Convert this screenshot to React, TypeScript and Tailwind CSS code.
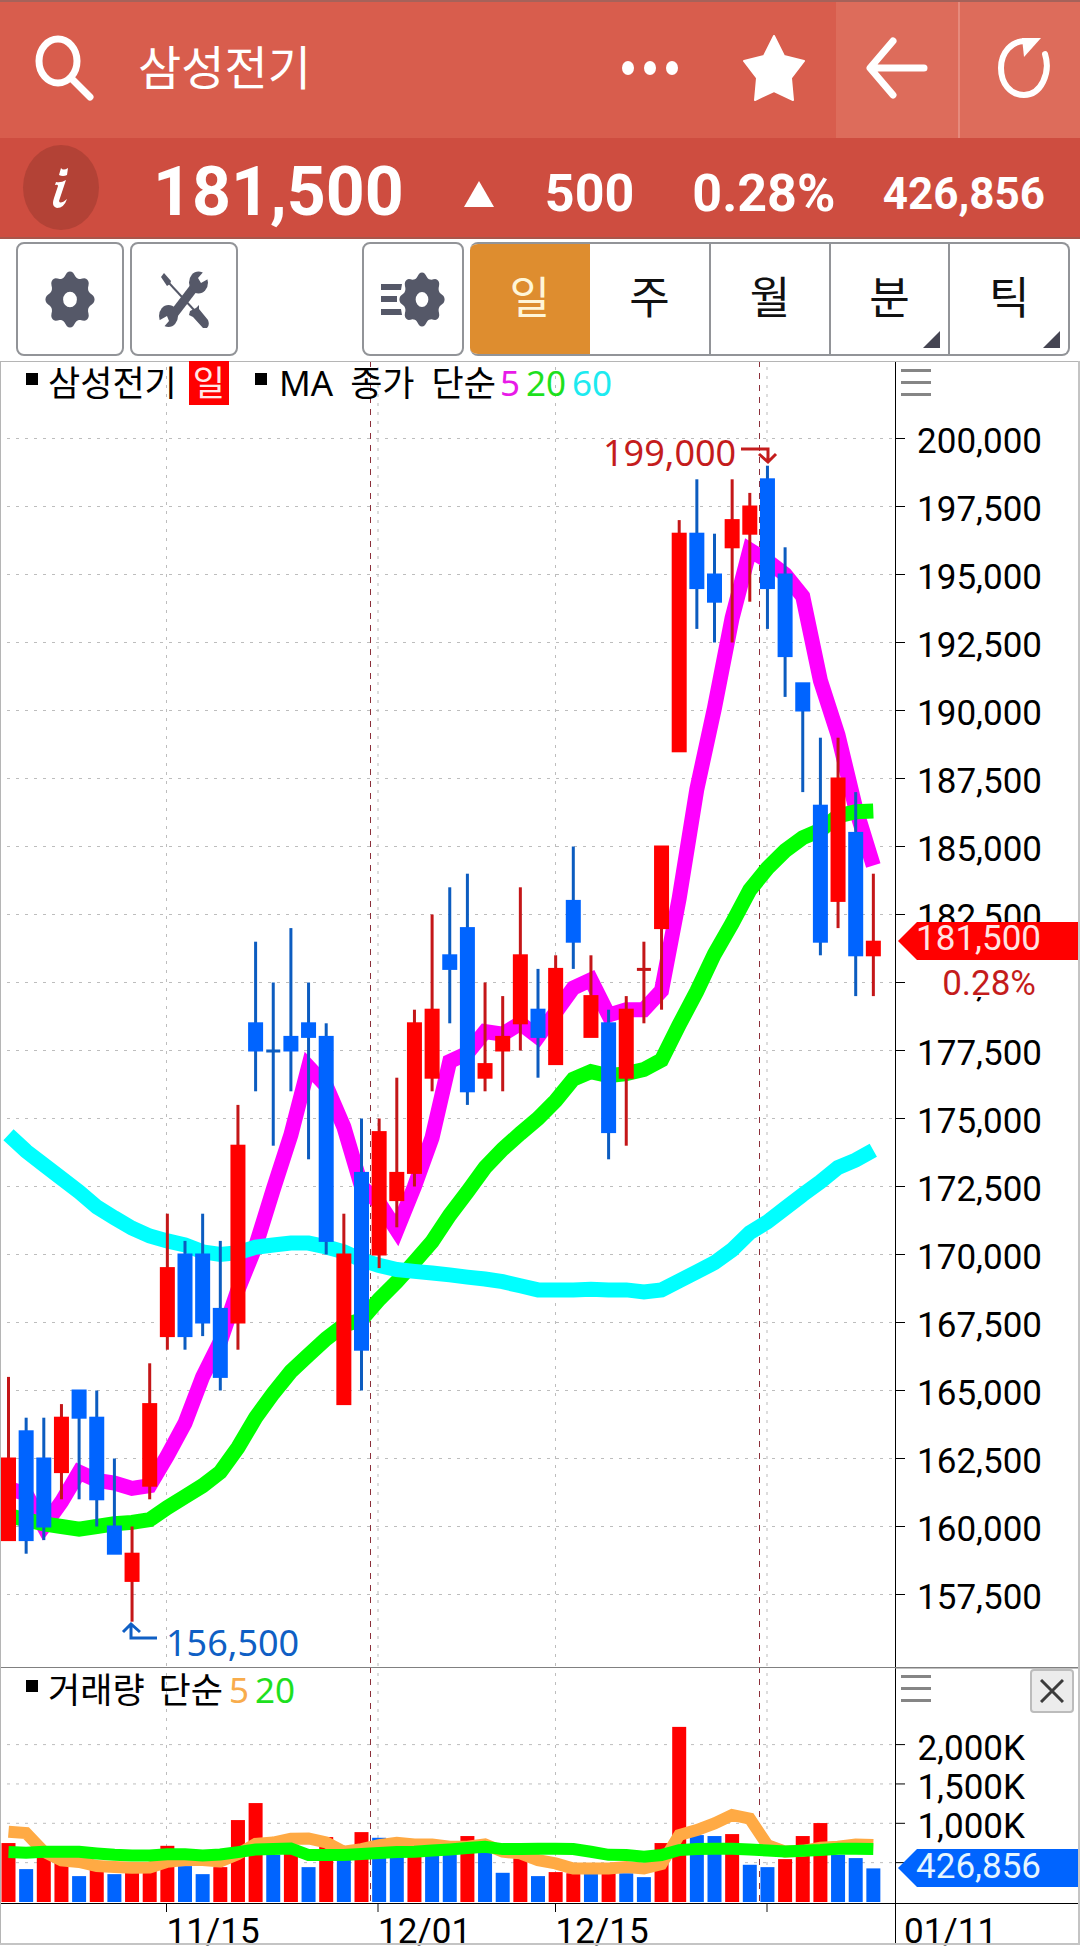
import { useState } from "react";
import clsx from "clsx";

type Candle = {
  open: number;
  high: number;
  low: number;
  close: number;
  volume: number;
  volumeUp: boolean;
};

// [open, high, low, close, volume, volumeUp], prices and volume in thousands
const rows: [number, number, number, number, number, number][] = [
  [159.5, 165.5, 159.5, 162.5, 749, 1],
  [163.5, 164, 159, 159.5, 418, 0],
  [162.5, 164, 159.5, 160, 575, 1],
  [162, 164.5, 161, 164, 500, 1],
  [165, 165, 161, 164, 329, 0],
  [164, 165, 160, 161, 420, 1],
  [160, 162.5, 159, 159, 354, 0],
  [158, 160, 156.5, 159, 390, 1],
  [161.5, 166, 161, 164.5, 410, 1],
  [167, 171.5, 166.5, 169.5, 714, 1],
  [170, 170.5, 166.5, 167, 456, 0],
  [170, 171.5, 167, 167.5, 354, 0],
  [168, 170.5, 165, 165.5, 443, 1],
  [167.5, 175.5, 166.5, 174, 1041, 1],
  [178.5, 181.5, 176, 177.5, 1257, 1],
  [177.5, 180, 174, 177.5, 600, 0],
  [178, 182, 176, 177.5, 620, 1],
  [178.5, 180, 173.5, 178, 443, 0],
  [178, 178.5, 170, 170.5, 825, 1],
  [164.5, 171.5, 164.5, 170, 580, 0],
  [173, 175, 165, 166.5, 888, 1],
  [170, 175, 169.5, 174.5, 816, 0],
  [172, 176.5, 171, 173, 600, 0],
  [173, 179, 172.5, 178.5, 590, 1],
  [176.5, 182.5, 176, 179, 590, 0],
  [181, 183.5, 178.5, 180.5, 600, 0],
  [182, 184, 175.5, 176, 838, 1],
  [176.5, 180, 176, 177, 640, 0],
  [177.5, 179.5, 176, 178, 371, 0],
  [178.5, 183.5, 177.5, 181, 555, 1],
  [179, 180.5, 176.5, 178, 329, 0],
  [177, 181, 177, 180.5, 380, 1],
  [183, 185, 180.5, 181.5, 365, 1],
  [178, 181, 178, 179.5, 365, 0],
  [178.5, 179, 173.5, 174.5, 370, 1],
  [176.5, 179.5, 174, 179, 365, 0],
  [180.5, 181.5, 178.5, 180.5, 316, 0],
  [182, 185, 179, 185, 749, 1],
  [188.5, 197, 188.5, 196.5, 2225, 1],
  [196.5, 198.5, 193, 194.5, 850, 0],
  [195, 196.5, 192.5, 194, 838, 0],
  [196, 198.5, 192.5, 197, 863, 1],
  [196.5, 198, 194, 197.5, 473, 0],
  [198.5, 199, 193, 194.5, 443, 0],
  [195, 196, 190.5, 192, 545, 1],
  [191, 191, 187, 190, 838, 1],
  [186.5, 189, 181, 181.5, 1003, 1],
  [183, 189, 182, 187.5, 600, 0],
  [185.5, 187, 179.5, 181, 558, 0],
  [181, 184, 179.5, 181.5, 427, 0],
];

const candles: Candle[] = rows.map(([open, high, low, close, volume, up]) => ({
  open,
  high,
  low,
  close,
  volume,
  volumeUp: up === 1,
}));

const dojiDown = 15;

// Averages for the sessions whose look-back starts before the visible range
const ma5Head = [161.4, 161.2, 160, 160.9];
const ma20Head = [
  160.4, 160.25, 160.1, 160, 159.9, 160, 160.1, 160.15, 160.25, 160.7, 161.1, 161.5, 162, 162.9,
  164, 164.9, 165.7, 166.3, 166.9,
];
const ma60 = [
  174.4, 173.8, 173.3, 172.8, 172.3, 171.75, 171.35, 170.97, 170.68, 170.5, 170.35, 170.1, 170,
  170.07, 170.27, 170.35, 170.42, 170.42, 170.28, 170.1, 169.8, 169.6, 169.45, 169.38, 169.32,
  169.25, 169.17, 169.1, 169, 168.85, 168.7, 168.7, 168.7, 168.72, 168.7, 168.7, 168.62, 168.7,
  169.03, 169.36, 169.7, 170.17, 170.8, 171.2, 171.7, 172.2, 172.67, 173.2, 173.47, 173.83,
];
const volumeMa5 = [
  893, 876, 640, 530, 510, 456, 443, 435, 439, 511, 532, 532, 515, 609, 740, 755, 804, 808, 757,
  638, 672, 723, 753, 732, 732, 702, 702, 732, 640, 617, 532, 490, 426, 426, 426, 443, 426, 481,
  850, 914, 999, 1105, 1058, 723, 640, 650, 690, 702, 732, 723,
];
const volumeMa20 = [
  634, 625, 638, 638, 638, 617, 600, 592, 592, 608, 608, 592, 604, 634, 668, 672, 680, 596, 596,
  596, 609, 621, 634, 638, 655, 668, 685, 702, 672, 672, 676, 676, 672, 638, 600, 596, 575, 596,
  659, 672, 676, 676, 668, 655, 642, 650, 659, 676, 676, 672,
];

const movingAverage = (head: number[], size: number) =>
  candles.map((_, i) =>
    i < size - 1
      ? head[i]
      : candles.slice(i - size + 1, i + 1).reduce((sum, c) => sum + c.close, 0) / size
  );

const ma5 = movingAverage(ma5Head, 5);
const ma20 = movingAverage(ma20Head, 20);

const PLOT_RIGHT = 895;
const xAt = (i: number) => 8.5 + i * 17.65;
const priceY = (p: number) => 77.5 + (200 - p) * 27.2;
const volumeY = (v: number) => 235 - v * 0.0787;

const points = (values: number[], y: (v: number) => number) =>
  values.map((v, i) => `${xAt(i).toFixed(1)},${y(v).toFixed(1)}`).join(" ");

const priceTicks = Array.from({ length: 18 }, (_, i) => 200 - i * 2.5);
const volumeTicks = [2000, 1500, 1000, 500];
const dateLines = [
  { x: 166.5, label: "11/15", wide: false },
  { x: 378, label: "12/01", wide: true },
  { x: 555.5, label: "12/15", wide: false },
  { x: 767, label: "", wide: true },
];
const monthLines = [370.5, 759.5];

const gearPath =
  Array.from({ length: 96 }, (_, i) => {
    const a = (i / 96) * Math.PI * 2;
    const wave = Math.cos(a * 8);
    const r = 25.8 + 2.7 * Math.sign(wave) * Math.pow(Math.abs(wave), 0.75);
    return `${i ? "L" : "M"}${(Math.cos(a) * r).toFixed(2)} ${(Math.sin(a) * r).toFixed(2)}`;
  }).join("") + "ZM8 0A8 8 0 1 0 -8 0A8 8 0 1 0 8 0Z";

function GearIcon({ className }: { className?: string }) {
  return (
    <svg viewBox="-29 -29 58 58" preserveAspectRatio="none" className={className}>
      <path d={gearPath} fill="currentColor" fillRule="evenodd" />
    </svg>
  );
}

function ToolsIcon() {
  return (
    <svg viewBox="0 0 50 57" className="h-[57px] w-[50px]" fill="currentColor">
      <path d="M5 2L12 10L11 13L8 15L2 6Z" />
      <path d="M10 12L36 40" stroke="currentColor" strokeWidth="2" />
      <path d="M30 44L31 40L37 37L40 34L40 38L49 49Q51 54 48 57L44 57L34 46Z" />
      <path d="M14 44L37 14" stroke="currentColor" strokeWidth="9" />
      <ellipse cx="39.5" cy="11.5" rx="9.5" ry="11" />
      <path d="M46 -1L39 7L42 12L51 7Z" fill="#fff" />
      <ellipse cx="9.5" cy="45" rx="9.5" ry="11" />
      <path d="M3 58L10 50L8 45L-1 50Z" fill="#fff" />
    </svg>
  );
}

function Header() {
  return (
    <header className="flex h-[138px] items-stretch border-t-2 border-[#a5625a] bg-[#d85d4d] text-white">
      <button aria-label="검색" className="flex w-[128px] items-center pb-1 pl-[34px]">
        <svg viewBox="0 0 60 66" className="h-[66px] w-[60px]" fill="none" stroke="currentColor" strokeWidth="7">
          <ellipse cx="24" cy="26" rx="19" ry="22" />
          <path d="M38 44L56 62" strokeLinecap="round" />
        </svg>
      </button>
      <h1 className="flex flex-1 items-center pb-3 pl-[10px] text-[47px] leading-none">삼성전기</h1>
      <button aria-label="더보기" className="flex w-[84px] items-center justify-center pb-1">
        <svg viewBox="0 0 58 16" className="h-[16px] w-[58px]" fill="currentColor">
          <ellipse cx="7" cy="8" rx="6" ry="7" />
          <ellipse cx="29" cy="8" rx="6" ry="7" />
          <ellipse cx="51" cy="8" rx="6" ry="7" />
        </svg>
      </button>
      <button aria-label="관심종목" className="flex w-[144px] items-center justify-center pb-1 pl-5">
        <svg viewBox="0 0 62 66" className="h-[66px] w-[62px]" fill="currentColor" stroke="currentColor" strokeWidth="2" strokeLinejoin="round">
          <path d="M31 1L41 21L61 26L48 43L50 65L31 56L12 65L14 43L1 26L21 21Z" />
        </svg>
      </button>
      <button aria-label="뒤로" className="flex w-[124px] items-center justify-center border-r-2 border-[#e68a7c] bg-[#dd6c5b] pb-1">
        <svg viewBox="0 0 62 62" className="h-[62px] w-[62px]" fill="none" stroke="currentColor" strokeWidth="7" strokeLinecap="round" strokeLinejoin="round">
          <path d="M27 4L4 31L27 58M5 31H58" />
        </svg>
      </button>
      <button aria-label="새로고침" className="flex w-[120px] items-center justify-center bg-[#dd6c5b] pb-1 pl-2">
        <svg viewBox="0 0 54 62" className="h-[62px] w-[54px]" fill="none" stroke="currentColor" strokeWidth="6">
          <path d="M48 17C54 36 44 58 27 58C13 58 4 46 4 31C4 15 15 4 28 4" strokeLinecap="round" />
          <path d="M25 1H44L27 20Z" fill="currentColor" stroke="none" />
        </svg>
      </button>
    </header>
  );
}

function QuoteBar() {
  return (
    <section className="flex h-[101px] items-center border-b-2 border-[#a8564b] bg-[#ce4d40] pr-[35px] pl-[23px] font-[Roboto,sans-serif] font-bold text-white">
      <button aria-label="종목정보" className="flex h-[85px] w-[76px] items-center justify-center rounded-[50%] bg-[#b34236]">
        <svg viewBox="0 0 18 42" className="h-[42px] w-[18px]" fill="currentColor">
          <path d="M9 1Q11 4 16 1L15 8Q11 10 7 8Z" />
          <path d="M4 15Q9 16 14 13L7 34Q8 38 15 32Q12 41 5 41Q-1 40 2 31L6 19Q6 17 3 18Z" />
        </svg>
      </button>
      <span className="mt-2 ml-[54px] text-[68px] leading-none">181,500</span>
      <svg viewBox="0 0 30 26" className="mt-3 ml-[60px] h-[26px] w-[30px]" fill="currentColor">
        <path d="M15 0L30 26H0Z" />
      </svg>
      <span className="mt-3 ml-[51px] text-[52px] leading-none">500</span>
      <span className="mt-3 ml-[58px] text-[52px] leading-none">0.28%</span>
      <span className="mt-3 ml-auto text-[44px] leading-none">426,856</span>
    </section>
  );
}

const periods = [
  { label: "일" },
  { label: "주" },
  { label: "월" },
  { label: "분", menu: true },
  { label: "틱", menu: true },
];

function Toolbar() {
  const [active, setActive] = useState("일");
  const square =
    "flex h-[114px] items-center justify-center rounded-lg border-2 border-[#929498] text-[#555868]";

  return (
    <nav className="flex h-[122px] items-center gap-[6px] bg-white pr-[10px] pb-[2px] pl-4">
      <button aria-label="설정" className={clsx(square, "w-[108px]")}>
        <GearIcon className="h-[57px] w-[50px]" />
      </button>
      <button aria-label="도구" className={clsx(square, "w-[108px]")}>
        <ToolsIcon />
      </button>
      <button aria-label="차트 설정" className={clsx(square, "ml-auto w-[102px]")}>
        <svg viewBox="0 0 22 31" className="-mr-1 h-[31px] w-[22px]" fill="currentColor">
          <path d="M0 0H21L20 6H0ZM0 12H16V18H0ZM0 25H20L21 31H0Z" />
        </svg>
        <GearIcon className="h-[55px] w-[46px]" />
      </button>
      <div className="grid h-[114px] w-[600px] grid-cols-5 overflow-hidden rounded-lg border-2 border-[#929498] has-[button:first-child[aria-pressed=true]]:border-l-0">
        {periods.map(({ label, menu }, i) => (
          <button
            key={label}
            aria-pressed={active === label}
            onClick={() => setActive(label)}
            className={clsx(
              "relative pb-2 text-[44px] leading-none",
              i > 1 && "border-l-2 border-[#929498]",
              active === label ? "-my-[2px] bg-[#de8d2f] text-[#fff6d8]" : "text-[#111]"
            )}
          >
            {label}
            {menu && (
              <svg viewBox="0 0 17 17" className="absolute right-2 bottom-[6px] size-[17px]">
                <path d="M17 0V17H0Z" fill="#454552" />
              </svg>
            )}
          </button>
        ))}
      </div>
    </nav>
  );
}

function DateGrid({ height }: { height: number }) {
  return (
    <g>
      {dateLines.map(({ x, wide }) => (
        <line key={x} x1={x} x2={x} y1="6" y2={height} stroke={wide ? "#dcdcdc" : "#bdbdbd"} strokeWidth={wide ? 2 : 1} strokeDasharray="3 6" />
      ))}
      {monthLines.map((x) => (
        <line key={x} x1={x} x2={x} y1="0" y2={height} stroke="#8c2f3a" strokeWidth="1" strokeDasharray="6 6" />
      ))}
    </g>
  );
}

function MenuButton({ label }: { label: string }) {
  return (
    <button aria-label={label} className="absolute top-2 left-[83.4%] flex h-[27px] w-[30px] flex-col justify-between">
      <span className="h-[3px] w-full bg-[#858585]" />
      <span className="h-[3px] w-full bg-[#858585]" />
      <span className="h-[3px] w-full bg-[#858585]" />
    </button>
  );
}

function PriceChart() {
  return (
    <section className="relative">
      <svg viewBox="0 0 1080 1306" className="block h-auto w-full" role="img" aria-label="삼성전기 일봉 차트">
        <DateGrid height={1306} />
        {priceTicks.map((p) => (
          <g key={p}>
            <line x1="7" x2={PLOT_RIGHT} y1={priceY(p)} y2={priceY(p)} stroke="#bdbdbd" strokeDasharray="3 6" />
            <line x1={PLOT_RIGHT} x2="905" y1={priceY(p)} y2={priceY(p)} stroke="#000" />
            <text x="1042" y={priceY(p) + 14} textAnchor="end" className="font-[Roboto,sans-serif] text-[35px]">
              {(p * 1000).toLocaleString("en-US")}
            </text>
          </g>
        ))}

        <g fill="none" strokeWidth="15" strokeMiterlimit="10">
          <polyline points={points(ma5, priceY)} stroke="#ff00ff" />
          <polyline points={points(ma20, priceY)} stroke="#00ff00" />
          <polyline points={points(ma60, priceY)} stroke="#00ffff" />
        </g>

        {candles.map((c, i) => {
          const up = c.close > c.open || (c.close === c.open && i !== dojiDown);
          const top = priceY(Math.max(c.open, c.close));
          const body = Math.abs(c.open - c.close) * 27.2;
          return (
            <g key={i}>
              <rect x={xAt(i) - 1.5} y={priceY(c.high)} width="3" height={(c.high - c.low) * 27.2} fill={up ? "#c41618" : "#0c5cc0"} />
              {body ? (
                <rect x={xAt(i) - 7.5} y={top - 1} width="15" height={body + 2} fill={up ? "#ff0000" : "#0064ff"} />
              ) : (
                <rect x={xAt(i) - 7} y={top - 1} width="14" height="3" fill={up ? "#c41618" : "#0c5cc0"} />
              )}
            </g>
          );
        })}

        {/* High and low of the visible range */}
        <g className="font-['Noto_Sans',sans-serif] text-[36px]">
          <text x="603" y="105" fill="#c41c1c">199,000</text>
          <path d="M741 88H768V99M759 93L768 101L776 93" fill="none" stroke="#c41c1c" strokeWidth="3" />
          <text x="166" y="1295" fill="#0f5fc4">156,500</text>
          <path d="M157 1277H131V1264M123 1271L131 1263L140 1271" fill="none" stroke="#0f5fc4" strokeWidth="3" />
        </g>

        <line x1="895.5" x2="895.5" y1="0" y2="1306" stroke="#000" />

        {/* Current price */}
        <g className="font-[Roboto,sans-serif] text-[35px]">
          <rect x="910" y="598" width="168" height="38" fill="#fff" />
          <path d="M898 580L917 561H1079V599H917Z" fill="#ff0000" />
          <text x="1041" y="589" textAnchor="end" fill="#ffe3e3">181,500</text>
          <text x="1036" y="634" textAnchor="end" fill="#c41c1c">0.28%</text>
        </g>

        <path d="M0 0.5H1080M0.5 0V1306" stroke="#b5b5b5" />
        <path d="M1079 0V1306" stroke="#c4c4c4" strokeWidth="2" />
      </svg>

      <div className="absolute top-0 left-[26px] flex items-center font-['Noto_Sans','Noto_Sans_CJK_KR',sans-serif] text-[35px] leading-[44px]">
        <span className="mr-[10px] mb-2 size-3 bg-black" />
        <span>삼성전기</span>
        <span className="mx-[12px] bg-[#ff0000] px-1 text-[#ffe8e8]">일</span>
        <span className="mr-3 mb-2 ml-[14px] size-3 bg-black" />
        <span>MA</span>
        <span className="ml-[17px]">종가</span>
        <span className="ml-[17px]">단순</span>
        <span className="ml-1 text-[#e81ae8]">5</span>
        <span className="ml-[6px] text-[#1ee01e]">20</span>
        <span className="ml-[6px] text-[#1eeaf0]">60</span>
      </div>
      <MenuButton label="가격 차트 메뉴" />
    </section>
  );
}

function VolumeChart() {
  return (
    <section className="relative">
      <svg viewBox="0 0 1080 281" className="block h-auto w-full" role="img" aria-label="거래량 차트">
        <DateGrid height={236} />
        {volumeTicks.map((v) => (
          <g key={v}>
            <line x1="7" x2={PLOT_RIGHT} y1={volumeY(v)} y2={volumeY(v)} stroke="#bdbdbd" strokeDasharray="3 6" />
            <line x1={PLOT_RIGHT} x2="905" y1={volumeY(v)} y2={volumeY(v)} stroke="#000" />
            {v > 500 && (
              <text x="1025" y={volumeY(v) + 15} textAnchor="end" className="font-[Roboto,sans-serif] text-[35px]">
                {v.toLocaleString("en-US")}K
              </text>
            )}
          </g>
        ))}
        {candles.map((c, i) => (
          <rect key={i} x={xAt(i) - 7} y={volumeY(c.volume)} width="14" height={c.volume * 0.0787} fill={c.volumeUp ? "#ff0000" : "#0064ff"} />
        ))}
        <g fill="none" strokeWidth="12">
          <polyline points={points(volumeMa5, volumeY)} stroke="#ffaa44" />
          <polyline points={points(volumeMa20, volumeY)} stroke="#00ff00" />
        </g>

        <path d="M0 236.5H1080M895.5 0V277" stroke="#000" />
        <g className="font-[Roboto,sans-serif] text-[35px]">
          {dateLines.map(({ x, label, wide }) => (
            <g key={x}>
              <line x1={x} x2={x} y1="237" y2="245" stroke={wide ? "#888" : "#000"} strokeWidth={wide ? 2 : 1} />
              {label && <text x={x} y="276">{label}</text>}
            </g>
          ))}
          <text x="904" y="276">01/11</text>
          <path d="M898 201L917 182H1079V220H917Z" fill="#0064ff" />
          <text x="1041" y="211" textAnchor="end" fill="#e6f6ff">426,856</text>
        </g>

        <path d="M0 0.5H895" stroke="#808080" />
        <path d="M895 0.5H1080" stroke="#808080" strokeWidth="2" />
        <path d="M0.5 0V277" stroke="#b5b5b5" />
        <path d="M1079 0V277M0 277H1080" stroke="#c4c4c4" strokeWidth="2" />
      </svg>

      <div className="absolute top-0 left-[26px] flex items-center font-['Noto_Sans','Noto_Sans_CJK_KR',sans-serif] text-[35px] leading-[46px]">
        <span className="mr-[10px] mb-2 size-3 bg-black" />
        <span>거래량</span>
        <span className="ml-[14px]">단순</span>
        <span className="ml-[6px] text-[#f8ac4c]">5</span>
        <span className="ml-[6px] text-[#1ee01e]">20</span>
      </div>
      <MenuButton label="거래량 차트 메뉴" />
      <button aria-label="닫기" className="absolute top-[2px] right-[6px] flex size-11 items-center justify-center rounded-sm border-2 border-[#bcbcbc] bg-[#ececec]">
        <svg viewBox="0 0 24 24" className="size-6" fill="none" stroke="#3c3c3c" strokeWidth="3">
          <path d="M1 1L23 23M23 1L1 23" />
        </svg>
      </button>
    </section>
  );
}

export default function App() {
  return (
    <div className="min-h-screen bg-white font-['Noto_Sans_CJK_KR',sans-serif] text-black">
      <Header />
      <QuoteBar />
      <Toolbar />
      <main>
        <PriceChart />
        <VolumeChart />
      </main>
    </div>
  );
}
